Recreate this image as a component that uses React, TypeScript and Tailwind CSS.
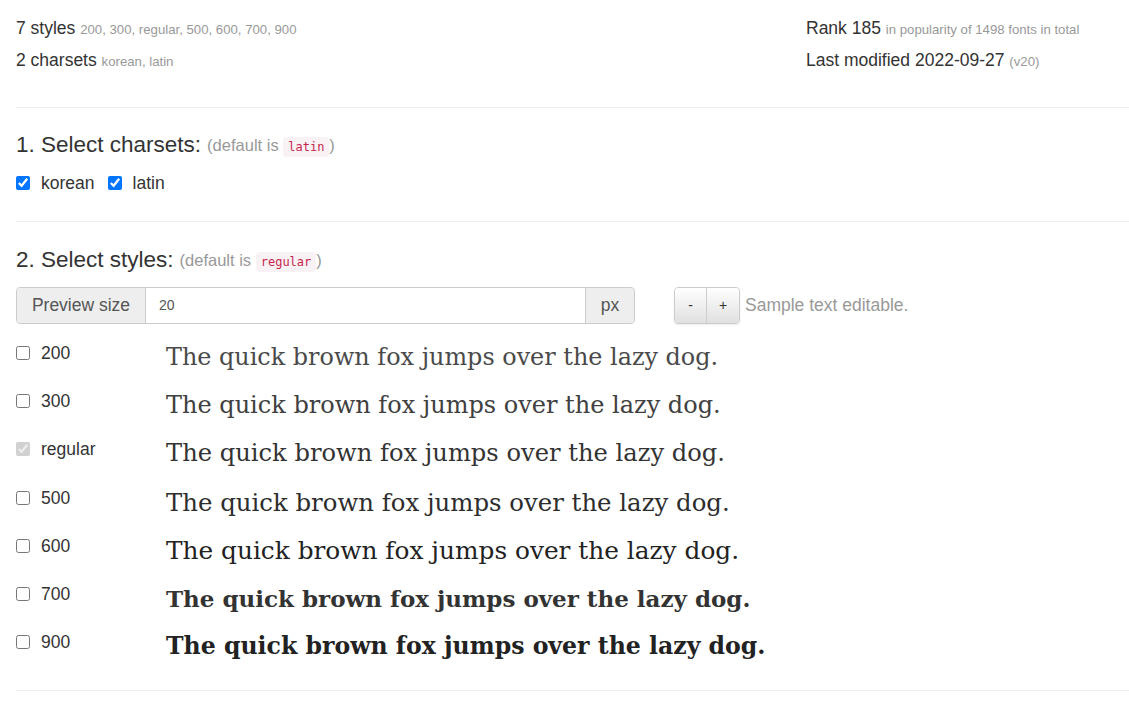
import React from "react";

const rows = [
  { label: "200", checked: false, disabled: false, cls: "font-normal text-[23.9px] text-[#4a4a4a]" },
  { label: "300", checked: false, disabled: false, cls: "font-normal text-[24px] text-[#404040]" },
  { label: "regular", checked: true, disabled: true, cls: "font-normal text-[24.2px] text-[#333]" },
  { label: "500", checked: false, disabled: false, cls: "font-normal text-[24.4px] text-[#2d2d2d]" },
  { label: "600", checked: false, disabled: false, cls: "font-normal text-[24.8px] text-[#222]" },
  { label: "700", checked: false, disabled: false, cls: "font-bold text-[23px] text-[#333]" },
  { label: "900", checked: false, disabled: false, cls: "font-bold text-[23.6px] text-[#222]" },
];

export default function App() {
  return (
    <div className="min-h-[708px] bg-white pl-4 text-[#333] font-['Liberation_Sans',Arial,sans-serif]">
      {/* header info */}
      <div className="flex pt-[17px]">
        <div className="w-[790px]">
          <div className="h-[22px] leading-[22px] text-[17.5px]">
            7 styles <span className="text-[13.2px] text-[#999]">200, 300, regular, 500, 600, 700, 900</span>
          </div>
          <div className="mt-[10px] h-[22px] leading-[22px] text-[17.5px]">
            2 charsets <span className="text-[13.2px] text-[#999]">korean, latin</span>
          </div>
        </div>
        <div>
          <div className="h-[22px] leading-[22px] text-[17.5px]">
            Rank 185 <span className="text-[13.2px] text-[#999]">in popularity of 1498 fonts in total</span>
          </div>
          <div className="mt-[10px] h-[22px] leading-[22px] text-[17.5px]">
            Last modified 2022-09-27 <span className="text-[13.2px] text-[#999]">(v20)</span>
          </div>
        </div>
      </div>

      <div className="mt-[36px] h-px bg-[#eee]" />

      {/* charsets */}
      <div className="mt-[24px] flex h-[26px] items-center">
        <span className="text-[22.5px]">1. Select charsets:</span>
        <span className="ml-[6px] text-[16.5px] text-[#999]">
          (default is{" "}
          <code className="rounded-[4px] bg-[#f9f2f4] px-[5px] py-[3px] font-['DejaVu_Sans_Mono',monospace] text-[12px] text-[#c7254e]">
            latin
          </code>
          )
        </span>
      </div>
      <div className="mt-[14px] flex h-[22px] items-center text-[17.5px]">
        <label className="flex items-center">
          <input type="checkbox" defaultChecked className="m-0 h-[14px] w-[14px] accent-[#0075ff]" />
          <span className="ml-[11px]">korean</span>
        </label>
        <label className="ml-[13px] flex items-center">
          <input type="checkbox" defaultChecked className="m-0 h-[14px] w-[14px] accent-[#0075ff]" />
          <span className="ml-[11px]">latin</span>
        </label>
      </div>

      <div className="mt-[27px] h-px bg-[#eee]" />

      {/* styles */}
      <div className="mt-[25px] flex h-[26px] items-center">
        <span className="text-[22.5px]">2. Select styles:</span>
        <span className="ml-[6px] text-[16.5px] text-[#999]">
          (default is{" "}
          <code className="rounded-[4px] bg-[#f9f2f4] px-[5px] py-[3px] font-['DejaVu_Sans_Mono',monospace] text-[12px] text-[#c7254e]">
            regular
          </code>
          )
        </span>
      </div>

      <div className="mt-[14px] flex h-[37px] items-stretch">
        <div className="flex w-[619px] items-stretch rounded-[4px] border border-[#ccc]">
          <div className="flex w-[129px] items-center justify-center rounded-l-[4px] border-r border-[#ccc] bg-[#eee] text-[17.5px] text-[#555]">
            Preview size
          </div>
          <input
            defaultValue="20"
            className="min-w-0 flex-1 px-[13px] text-[14px] text-[#555] outline-none"
          />
          <div className="flex w-[49px] items-center justify-center rounded-r-[4px] border-l border-[#ccc] bg-[#eee] text-[17.5px] text-[#555]">
            px
          </div>
        </div>
        <div className="ml-[39px] flex items-stretch rounded-[4px] border border-[#ccc] shadow-[0_1px_2px_rgba(0,0,0,0.08)]">
          <button className="w-[31px] rounded-l-[4px] bg-gradient-to-b from-white to-[#e0e0e0] text-[14px] text-[#333]">-</button>
          <button className="w-[33px] rounded-r-[4px] border-l border-[#ccc] bg-gradient-to-b from-white to-[#e0e0e0] text-[14px] text-[#333]">+</button>
        </div>
        <div className="ml-[5px] flex items-center text-[17.5px] text-[#999]">Sample text editable.</div>
      </div>

      {/* rows */}
      <div className="mt-[15px]">
        {rows.map((r) => (
          <div key={r.label} className="flex h-[48.2px] items-start">
            <label className="flex w-[150px] items-center pt-[4px] text-[17.5px] leading-[20px]">
              <input
                type="checkbox"
                defaultChecked={r.checked}
                disabled={r.disabled}
                className="m-0 h-[14px] w-[14px] accent-[#0075ff]"
              />
              <span className="ml-[11px]">{r.label}</span>
            </label>
            <div className={`font-['DejaVu_Serif',serif] leading-[37px] ${r.cls}`}>
              The quick brown fox jumps over the lazy dog.
            </div>
          </div>
        ))}
      </div>

      <div className="mt-[14px] h-px bg-[#eee]" />
    </div>
  );
}
